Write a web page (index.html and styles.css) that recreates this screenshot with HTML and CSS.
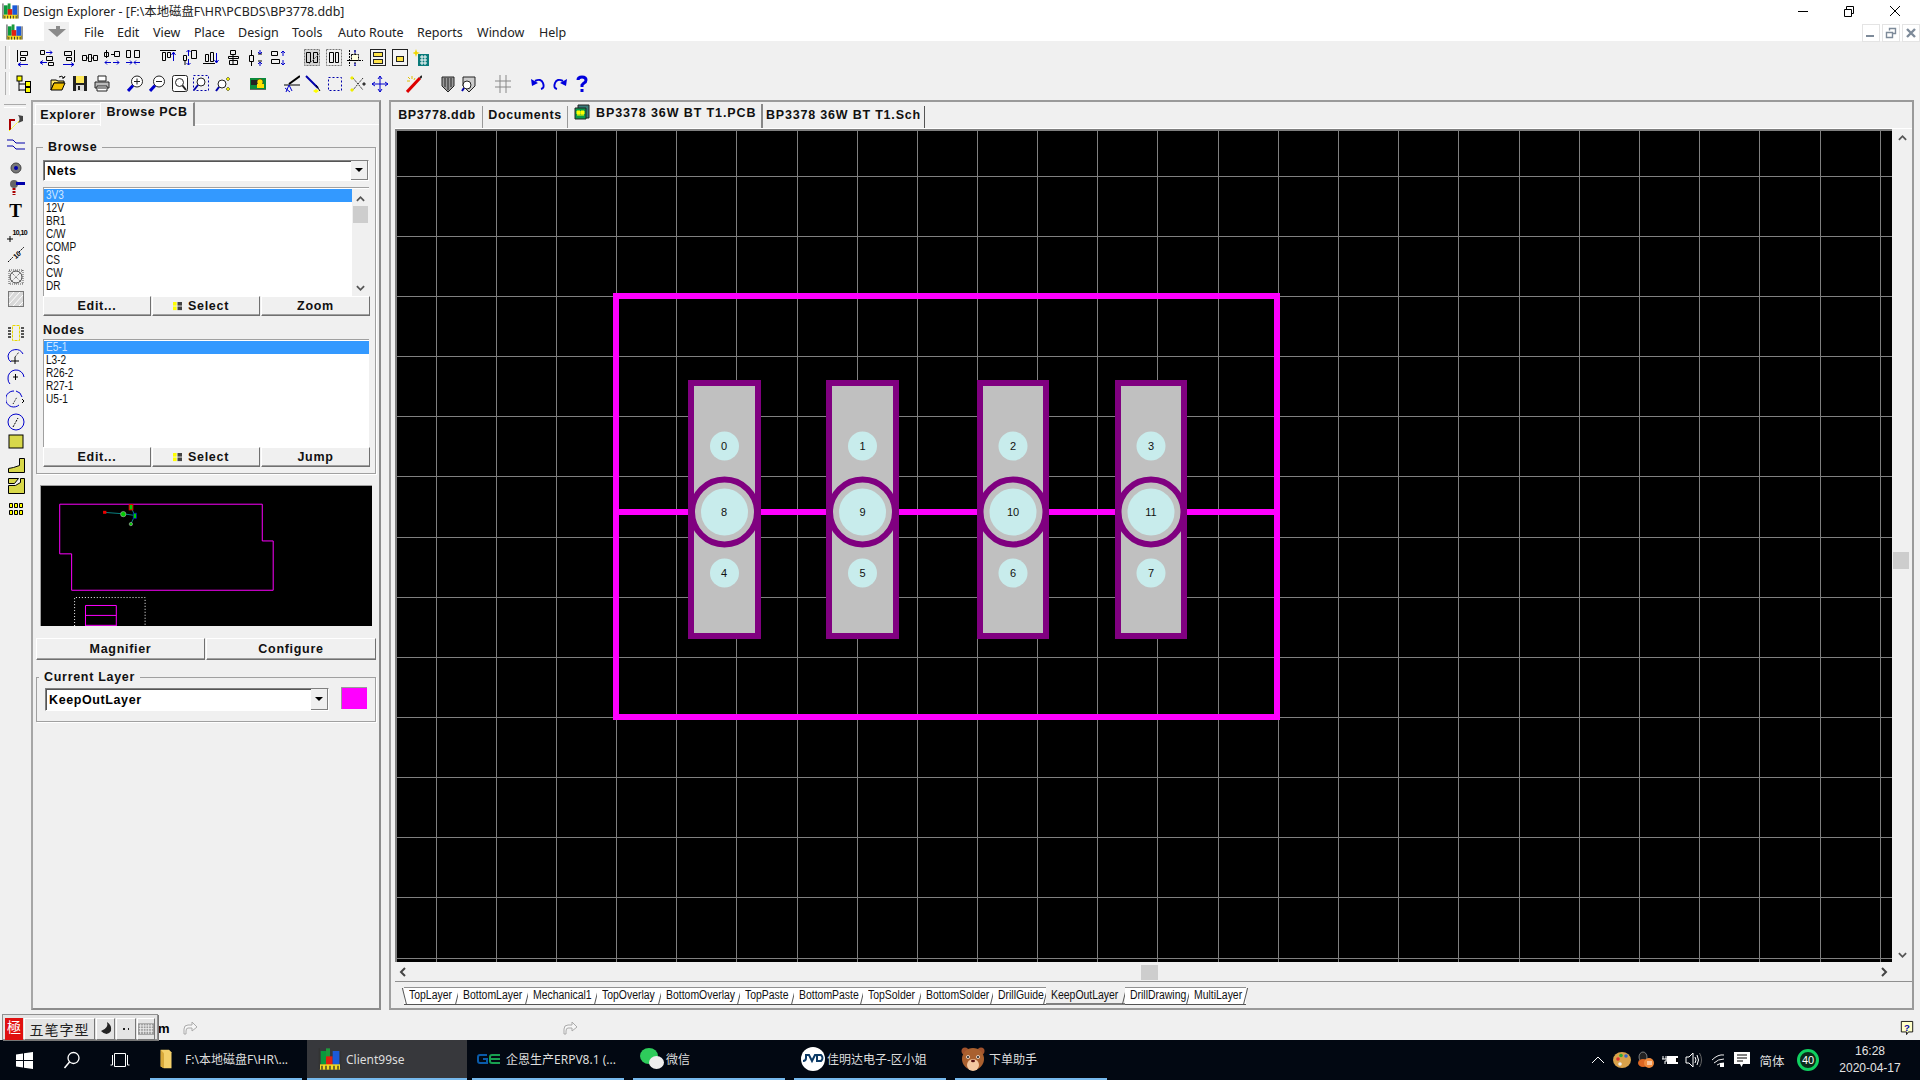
FILE: index.html
```html
<!DOCTYPE html>
<html lang="zh">
<head>
<meta charset="utf-8">
<title>Design Explorer</title>
<link rel="stylesheet" href="styles.css">
</head>
<body>
<svg class="defs" width="0" height="0">
  <symbol id="protel" viewBox="0 0 18 18">
    <rect x="2" y="3" width="4" height="10" fill="#0a9a3c"/><rect x="6" y="1" width="3" height="7" fill="#1e9a3c"/>
    <rect x="6" y="7" width="5" height="7" fill="#e02010"/><rect x="11" y="3" width="5" height="11" fill="#1a5ad8"/>
    <rect x="1" y="13" width="16" height="4" fill="#f4dc20"/><path d="M1 1v16M17 3v14" stroke="#333"/>
    <path d="M3 14v3M6 14v3M9 14v3M12 14v3M15 14v3" stroke="#333"/>
  </symbol>
  <symbol id="check" viewBox="0 0 10 10">
    <rect width="4" height="4" fill="#ff0"/><rect y="5" width="4" height="4" fill="#ff0"/><rect x="5" width="5" height="4" fill="#444"/><rect x="5" y="5" width="5" height="4" fill="#444"/>
  </symbol>
  <symbol id="chev-up" viewBox="0 0 10 8"><path d="M1 6l4-4 4 4" fill="none" stroke="#555" stroke-width="2"/></symbol>
  <symbol id="chev-down" viewBox="0 0 10 8"><path d="M1 2l4 4 4-4" fill="none" stroke="#555" stroke-width="2"/></symbol>
  <symbol id="chev-left" viewBox="0 0 8 10"><path d="M6 1L2 5l4 4" fill="none" stroke="#444" stroke-width="2"/></symbol>
  <symbol id="chev-right" viewBox="0 0 8 10"><path d="M2 1l4 4-4 4" fill="none" stroke="#444" stroke-width="2"/></symbol>
  <symbol id="ghost-arrow" viewBox="0 0 16 16"><path d="M2 15V10q0-4 4-4h4V3l5 5-5 4V9H6q-2 0-2 3v3z" fill="#f6f6f6" stroke="#aaa"/></symbol>
</svg>

<header class="titlebar">
  <svg class="app-ico"><use href="#protel"/></svg>
  <span class="title-text">Design Explorer - [F:\本地磁盘F\HR\PCBDS\BP3778.ddb]</span>
  <div class="winbtns">
    <svg class="winbtn" viewBox="0 0 46 20"><path d="M18 10.5h10" stroke="#000" fill="none"/></svg>
    <svg class="winbtn" viewBox="0 0 46 20"><path d="M18.5 8.5h7v7h-7zM20.5 8V5.5h7v7H26" stroke="#000" fill="none"/></svg>
    <svg class="winbtn" viewBox="0 0 46 20"><path d="M18 5l10 10M28 5L18 15" stroke="#000" fill="none"/></svg>
  </div>
</header>

<nav class="menubar">
  <svg class="menu-ico"><use href="#protel"/></svg>
  <span class="doc-chip"><svg width="22" height="16" viewBox="0 0 22 16"><path d="M2 5h8V2h4v3h6l-9 8z" fill="#8a8a8a"/></svg></span>
  <div class="menus">
    <span>File</span><span>Edit</span><span>View</span><span>Place</span><span>Design</span><span>Tools</span><span>Auto Route</span><span>Reports</span><span>Window</span><span>Help</span>
  </div>
  <div class="mdibtns">
    <span class="mdi"><svg width="12" height="12" viewBox="0 0 12 12"><rect x="1" y="8" width="8" height="2" fill="#7d8a99"/></svg></span>
    <span class="mdi"><svg width="12" height="12" viewBox="0 0 12 12"><path d="M1.5 5.5h6v5h-6zM4.5 3.5v-2h6v5h-3" fill="none" stroke="#7d8a99" stroke-width="1.4"/></svg></span>
    <span class="mdi"><svg width="12" height="12" viewBox="0 0 12 12"><path d="M2 2l8 8M10 2l-8 8" stroke="#7d8a99" stroke-width="2.4"/></svg></span>
  </div>
</nav>

<section class="toolbars">
  <div class="tbrow tbrow-a">
    <svg class="ic" viewBox="0 0 16 18"><path class="k" d="M1.500 1v12M4.500 2.500h7v4h-7zM4.500 8.500h5v3h-5z"/><path class="u" d="M2 15.500h10M2 15.500l3-2M2 15.500l3 2"/></svg>
    <svg class="ic" viewBox="0 0 16 18"><path class="k" d="M1.500 1.500h4v4h-4zM7.500 7.500h6v4h-6zM9.500 13.500h5v3h-5z"/><path class="u" d="M7 3.500h6M13 3.500l-2-2M13 3.500l-2 2M1 13.500h7M1 13.500l3-2M1 13.500l3 2"/></svg>
    <svg class="ic" viewBox="0 0 16 18"><path class="k" d="M14.500 1v12M4.500 2.500h7v4h-7zM6.500 8.500h5v3h-5z"/><path class="u" d="M3 15.500h11M14 15.500l-3-2M14 15.500l-3 2"/></svg>
    <svg class="ic" viewBox="0 0 16 18"><path class="k" d="M.5 6.500h4v5h-4zM6.500 5.500h3v7h-3zM11.500 6.500h4v5h-4zM4 9h3M9 9h3"/></svg>
    <svg class="ic" viewBox="0 0 16 18"><path class="k" d="M2.500 1v8M.5 3.500h4v4h-4zM10.500 2.500h5v5h-5zM7 5.500h3"/><path class="u" d="M1 13.500h6M1 13.500l2-2M1 13.500l2 2M9 13.500h6M15 13.500l-2-2M15 13.500l-2 2"/></svg>
    <svg class="ic" viewBox="0 0 16 18"><path class="k" d="M1.500 1.500h4v7h-4zM9.500 1.500h5v7h-5z"/><path class="u" d="M1 13.500h6M7 13.500l-2-2M7 13.500l-2 2M9 13.500h6M9 13.500l2-2M9 13.500l2 2"/></svg>
    <svg class="ic" viewBox="0 0 16 18"><path class="k" d="M0 1.500h16M2.500 3.500h3v8h-3zM7.500 3.500h3v5h-3z"/><path class="u" d="M13.500 3v9M13.500 3l-2 3M13.500 3l2 3"/></svg>
    <svg class="ic" viewBox="0 0 16 18"><path class="k" d="M1.500 6.500h3v5h-3zM9.500 1.500h5v8h-5zM3 11v5"/><path class="u" d="M6.500 1v6M6.500 1l-2 2M6.500 1l2 2M6.500 10v6M6.500 16l-2-2M6.500 16l2-2"/></svg>
    <svg class="ic" viewBox="0 0 16 18"><path class="k" d="M0 14.500h12M2.500 5.500h3v7h-3zM7.500 3.500h3v9h-3z"/><path class="u" d="M13.500 4v10M13.500 14l-2-3M13.500 14l2-3"/></svg>
    <svg class="ic" viewBox="0 0 16 18"><path class="k" d="M4.500 1.500h5v4h-5zM2.500 7.500h10v2h-10zM3.500 11.500h8v4h-8zM7 5v11"/></svg>
    <svg class="ic" viewBox="0 0 16 18"><path class="k" d="M3.500 1v5M1.500 6.500h4v6h-4zM3.500 13v4M10 5h4M10 12h4"/><path class="u" d="M12 1v4M12 5l-2-2M12 5l2-2M12 13v4M12 13l-2 2M12 13l2 2"/></svg>
    <svg class="ic" viewBox="0 0 16 18"><path class="k" d="M1.500 2.500h6v4h-6zM1.500 10.500h8v4h-8z"/><path class="u" d="M13 2v5M13 2l-2 2M13 2l2 2M13 16v-5M13 16l-2-2M13 16l2-2"/></svg>
    <svg class="ic" viewBox="0 0 16 18"><rect x=".5" y=".5" width="15" height="16" fill="#d4d4d4" stroke="#777" stroke-dasharray="2 1"/><path class="k" d="M2.500 3.500h4v10h-4zM9.500 3.500h4v10h-4z"/><path d="M5 15L15 5" stroke="#777"/></svg>
    <svg class="ic" viewBox="0 0 16 18"><rect x=".5" y=".5" width="15" height="16" fill="#f0f0f0" stroke="#777" stroke-dasharray="2 1"/><path class="k" d="M3.500 3.500h4v10h-4zM9.500 3.500h3v10h-3z"/></svg>
    <svg class="ic" viewBox="0 0 16 18"><path class="k" d="M4.500 5.500h7v6h-7zM0 11.500h16M8 1v16M2.500 1v16" stroke-dasharray="2 1"/><rect x="5" y="6" width="6" height="5" fill="#ffd"/><path class="u" d="M8 1v3M8 17v-3"/></svg>
    <svg class="ic" viewBox="0 0 16 18"><rect x=".5" y=".5" width="15" height="16" fill="#f4f4f4" stroke="#222"/><rect x="3.500" y="3.500" width="9" height="4" fill="#ffe44a" stroke="#222"/><rect x="3.500" y="10.500" width="9" height="4" fill="#ffe44a" stroke="#222"/></svg>
    <svg class="ic" viewBox="0 0 16 18"><rect x=".5" y=".5" width="15" height="16" fill="#f4f4f4" stroke="#222"/><rect x="4.500" y="7.500" width="7" height="5" fill="#ffe44a" stroke="#222"/></svg>
    <svg class="ic" viewBox="0 0 16 18"><path d="M3 0l1 3 3 1-3 1-1 3-1-3-3-1 3-1z" fill="#f0d800"/><rect x="5" y="5" width="11" height="12" fill="#0a7a7a"/><path d="M7 8h7M7 11h7M7 14h7M9 6v10M12 6v10" stroke="#fff"/></svg>
  </div>
  <div class="tbrow tbrow-b">
    <svg class="ic" viewBox="0 0 16 18"><path d="M3 4v12M3 9h7M3 15h7" stroke="#000" fill="none"/><rect x="1" y="1" width="5" height="5" fill="#ff0" stroke="#000"/><rect x="9.500" y="6.500" width="5" height="5" fill="#ff0" stroke="#000"/><rect x="9.500" y="12.500" width="5" height="5" fill="#ff0" stroke="#000"/></svg>
    <svg class="ic" viewBox="0 0 16 18"><path d="M1 5h5l2 1h6v2H4L1 15z" fill="#ffe86a" stroke="#000"/><path d="M1 15l3-7h11l-3 7z" fill="#f0c000" stroke="#000"/><path d="M9 2q3-2 5 1M14 3l1-2M14 3l-2 0" fill="none" stroke="#000"/></svg>
    <svg class="ic" viewBox="0 0 16 18"><rect x="1" y="1" width="14" height="15" fill="#222"/><rect x="4" y="1" width="8" height="7" fill="#ffe95a"/><rect x="4" y="10" width="8" height="6" fill="#ddd"/><rect x="6" y="11" width="2" height="4" fill="#222"/></svg>
    <svg class="ic" viewBox="0 0 16 18"><path d="M4 1h8v5H4z" fill="#fff" stroke="#222"/><path d="M1 7h14v6H1z" fill="#bbb" stroke="#222"/><path d="M3 11h10v5H3z" fill="#fff" stroke="#222"/><path d="M4 13h8" stroke="#222"/></svg>
    <svg class="ic" viewBox="0 0 16 18"><circle cx="10" cy="6.500" r="5.500" fill="#fff" stroke="#222"/><path d="M7 6.500h6M10 3.500v6" stroke="#222"/><path d="M6 10.500L1 16" stroke="#00c" stroke-width="3"/></svg>
    <svg class="ic" viewBox="0 0 16 18"><circle cx="10" cy="6.500" r="5.500" fill="#fff" stroke="#222"/><path d="M7 6.500h6" stroke="#222"/><path d="M6 10.500L1 16" stroke="#00c" stroke-width="3"/></svg>
    <svg class="ic" viewBox="0 0 16 18"><rect x=".5" y=".5" width="15" height="16" rx="2" fill="#fff" stroke="#222"/><circle cx="7.500" cy="7.500" r="4" fill="none" stroke="#222"/><path d="M10.500 10.500L14 15" stroke="#222" stroke-width="2"/></svg>
    <svg class="ic" viewBox="0 0 16 18"><rect x=".5" y=".5" width="15" height="15" fill="none" stroke="#00a" stroke-dasharray="2 2"/><circle cx="8" cy="7" r="4" fill="#fff" stroke="#222"/><path d="M5 10l-4 5" stroke="#00a" stroke-width="2"/></svg>
    <svg class="ic" viewBox="0 0 16 18"><circle cx="7" cy="9" r="4" fill="#fff" stroke="#222"/><path d="M4 12l-3 4" stroke="#00a" stroke-width="2"/><path d="M13 2l2 2-2 2-2-2zM13 12l2 2-2 2-2-2z" fill="#ee0" stroke="#222" stroke-width=".5"/></svg>
    <svg class="ic" viewBox="0 0 16 18"><rect y="3" width="16" height="11" fill="#0a8a3a"/><rect x="1" y="5" width="7" height="5" fill="#222"/><circle cx="10" cy="7" r="3" fill="#ffe000" stroke="#222" stroke-width=".5"/><rect x="7" y="9" width="7" height="4" fill="#ffe000"/><rect x="0" y="14" width="16" height="1" fill="#666"/></svg>
    <svg class="ic" viewBox="0 0 16 18"><path d="M5 9L16 1" stroke="#000" stroke-width="2"/><path d="M0 10h16" stroke="#000"/><path d="M5 10L2 17M5 10l3 6M1 13l5 4" stroke="#00c" fill="none"/></svg>
    <svg class="ic" viewBox="0 0 16 18"><path d="M1 1l12 12" stroke="#00a" stroke-width="2"/><path d="M11 10l4 6" stroke="#000"/><path d="M8 16l3-2 3 2-3 2z" fill="#ff0"/></svg>
    <svg class="ic" viewBox="0 0 16 18"><rect x="1.500" y="2.500" width="13" height="13" fill="none" stroke="#00a" stroke-dasharray="2 2"/></svg>
    <svg class="ic" viewBox="0 0 16 18"><path d="M3 3l10 12M13 3L3 15" stroke="#333" stroke-dasharray="2 1"/><path d="M2 1l2 2-2 2-2-2zM2 13l2 2-2 2-2-2z" fill="#ee0"/><path d="M14 7l2 2-2 2-2-2z" fill="#333"/></svg>
    <svg class="ic" viewBox="0 0 16 18"><path d="M8 1v16M0 9h16M8 1L6 4M8 1l2 3M8 17l-2-3M8 17l2-3M0 9l3-2M0 9l3 2M16 9l-3-2M16 9l-3 2" stroke="#00c" fill="none"/></svg>
    <svg class="ic" viewBox="0 0 16 18"><path d="M1 17L14 3" stroke="#d00" stroke-width="3"/><path d="M14 3l2-2" stroke="#222" stroke-width="2"/><path d="M2 2l2 2M6 1v3M1 6h3M9 3L8 5" stroke="#e0c000"/></svg>
    <svg class="ic" viewBox="0 0 16 18"><path d="M2 2h12v9l-6 6-6-6z" fill="#999" stroke="#222"/><path d="M5 3v9M8 3v12M11 3v9" stroke="#222"/></svg>
    <svg class="ic" viewBox="0 0 16 18"><path d="M2 2h12v9l-6 6-6-6z" fill="#ccc" stroke="#222"/><circle cx="6" cy="10" r="4" fill="#fff" stroke="#222"/><path d="M3 13l-2 3" stroke="#00a" stroke-width="2"/></svg>
    <svg class="ic" viewBox="0 0 16 18"><path d="M0 6h16M0 12h16M5 0v18M11 0v18" stroke="#888" fill="none"/></svg>
    <svg class="ic" viewBox="0 0 16 18"><path d="M5 6q6-3 8 2t-2 6" fill="none" stroke="#00d" stroke-width="2"/><path d="M1 4l1 7 6-3z" fill="#00d"/></svg>
    <svg class="ic" viewBox="0 0 16 18"><path d="M11 6Q5 3 3 8t2 6" fill="none" stroke="#00d" stroke-width="2"/><path d="M15 4l-1 7-6-3z" fill="#00d"/></svg>
    <svg class="ic" viewBox="0 0 16 18"><path d="M4 5q0-3 4-3t4 3q0 2-2 3l-2 2v2" fill="none" stroke="#00d" stroke-width="3"/><rect x="6.500" y="14" width="3" height="3" fill="#00d"/></svg>
  </div>
</section>

<main class="workspace">
  <aside class="toolstrip">
    <svg class="ic-l" viewBox="0 0 20 18"><path d="M4 16V6h5" fill="none" stroke="#a00" stroke-width="2"/><path d="M3 17l12-12" stroke="#ff0" stroke-dasharray="2 1"/><path d="M12 1q3 4 0 8l5-2V2z" fill="#444"/></svg>
    <svg class="ic-l" viewBox="0 0 20 18"><path d="M1 5h6l3 3h9M1 11h6l3 3h9" fill="none" stroke="#00a"/></svg>
    <svg class="ic-l" viewBox="0 0 20 18"><circle cx="10" cy="9" r="5" fill="#777" stroke="#444"/><circle cx="10" cy="9" r="2" fill="#00a"/></svg>
    <svg class="ic-l" viewBox="0 0 20 18"><path d="M8 7v10" stroke="#a00" stroke-width="3" stroke-dasharray="2 1"/><circle cx="8" cy="6" r="4" fill="#666"/><rect x="10" y="4" width="9" height="3" fill="#00a"/></svg>
    <span class="t-tool">T</span>
    <svg class="ic-l ic-coord" viewBox="0 0 28 18"><path d="M5 13h6M8 10v6" stroke="#000"/><text x="10.500" y="9" class="mini mini-coord">10,10</text></svg>
    <svg class="ic-l" viewBox="0 0 20 18"><path d="M2 16l5-5M13 6l5-5" stroke="#000" stroke-dasharray="2 1"/><text x="7" y="12" class="mini" transform="rotate(-40 10 9)">10</text></svg>
    <svg class="ic-l" viewBox="0 0 20 18"><circle cx="10" cy="9" r="6" fill="none" stroke="#444"/><path d="M3 2h14v14H3zM3 2l14 14M17 2L3 16" fill="none" stroke="#555" stroke-dasharray="1 1"/></svg>
    <svg class="ic-l" viewBox="0 0 20 18"><rect x="2.500" y="1.500" width="15" height="15" fill="#d8d8d8" stroke="#777"/><path d="M3 8l5-6M3 14L14 2M7 16L17 5M13 16l4-4" stroke="#fff"/></svg>
    <svg class="ic-l" viewBox="0 0 20 18"><path d="M6.500 1.500h7v15h-7z" fill="none" stroke="#e8d800" stroke-dasharray="3 1"/><path d="M2 4h3M2 7h3M2 10h3M2 13h3M15 4h3M15 7h3M15 10h3M15 13h3" stroke="#222" stroke-width="1.500"/></svg>
    <svg class="ic-l" viewBox="0 0 20 18"><path d="M2 9a8 8 0 0 1 15-2" fill="none" stroke="#00c"/><path d="M2 9q0 4 3 6" fill="none" stroke="#00c"/><path d="M5 14h8M9 10v7" stroke="#000"/><path d="M9 10l4-5" stroke="#000" stroke-dasharray="1 1"/></svg>
    <svg class="ic-l" viewBox="0 0 20 18"><path d="M2 11a8 8 0 0 1 16-2" fill="none" stroke="#00c"/><path d="M2 11q0 3 2 5" fill="none" stroke="#00c"/><path d="M7 9h5M9.500 6v6" stroke="#000"/></svg>
    <svg class="ic-l" viewBox="0 0 20 18"><path d="M8 1a8 8 0 1 0 5 14M10 1a8 8 0 0 1 6 6" fill="none" stroke="#00c"/><path d="M7 14l4-7" stroke="#000" stroke-dasharray="1 1"/><path d="M16 9l2 2-2 2" stroke="#000" fill="none"/></svg>
    <svg class="ic-l" viewBox="0 0 20 18"><circle cx="10" cy="9" r="8" fill="none" stroke="#00c"/><path d="M7 14l5-9" stroke="#000" stroke-dasharray="2 1"/></svg>
    <svg class="ic-l" viewBox="0 0 20 18"><rect x="3" y="2" width="14" height="13" fill="#d8d84a" stroke="#000" stroke-width="1"/></svg>
    <svg class="ic-l" viewBox="0 0 20 18"><path d="M2.500 16.500v-4l5-1 6-2v-7h5v14z" fill="#d8d84a" stroke="#000"/></svg>
    <svg class="ic-l" viewBox="0 0 20 18"><path d="M2.500 1.500h10l-4 5h-6zM2.500 8.500h7l5-3v-4h4v15h-16z" fill="#d8d84a" stroke="#000"/></svg>
    <svg class="ic-l" viewBox="0 0 20 18"><path d="M3.500 3.500h3v4h-3zM8.500 3.500h3v4h-3zM13.500 3.500h3v4h-3zM3.500 10.500h3v4h-3zM8.500 10.500h3v4h-3zM13.500 10.500h3v4h-3z" fill="#ff0" stroke="#000"/></svg>
  </aside>

  <aside class="sidepanel">
    <div class="ptabs">
      <span class="ptab">Explorer</span>
      <span class="ptab ptab-on">Browse PCB</span>
    </div>
    <div class="ppage">
      <fieldset class="group group-browse">
        <legend>Browse</legend>
        <div class="combo"><span class="combo-val">Nets</span><span class="combo-btn"><i class="tri"></i></span></div>
        <div class="listbox listbox-nets">
          <ul class="items">
            <li class="sel"><span>3V3</span></li><li><span>12V</span></li><li><span>BR1</span></li><li><span>C/W</span></li><li><span>COMP</span></li><li><span>CS</span></li><li><span>CW</span></li><li><span>DR</span></li>
          </ul>
          <div class="vscroll-mini">
            <svg class="chev"><use href="#chev-up"/></svg>
            <span class="thumb"></span>
            <svg class="chev chev-b"><use href="#chev-down"/></svg>
          </div>
        </div>
        <div class="btnrow">
          <button class="btn">Edit...</button>
          <button class="btn btn-sel"><svg class="chk"><use href="#check"/></svg>Select</button>
          <button class="btn">Zoom</button>
        </div>
        <div class="nodes-label">Nodes</div>
        <div class="listbox listbox-nodes">
          <ul class="items items-full">
            <li class="sel"><span>E5-1</span></li><li><span>L3-2</span></li><li><span>R26-2</span></li><li><span>R27-1</span></li><li><span>U5-1</span></li>
          </ul>
        </div>
        <div class="btnrow">
          <button class="btn">Edit...</button>
          <button class="btn btn-sel"><svg class="chk"><use href="#check"/></svg>Select</button>
          <button class="btn">Jump</button>
        </div>
      </fieldset>

      <svg class="preview" viewBox="121 45 995 423">
        <path d="M175 100H787V211H820V360H211V250H175Z" fill="none" stroke="#f0f" stroke-width="3"/>
        <path d="M220 468V382H433V468" fill="none" stroke="#fff" stroke-width="3" stroke-dasharray="3 6"/>
        <path d="M253 468V406H346V468M253 436H346M253 466H346" fill="none" stroke="#f0f" stroke-width="3"/>
        <path d="M315 125L367 129 402 134M390 108L402 134 390 160" fill="none" stroke="#0a8080" stroke-width="3"/>
        <rect x="306" y="120" width="10" height="9" fill="#e00"/>
        <circle cx="367" cy="130" r="8" fill="#0c0" stroke="#aaa" stroke-width="2"/>
        <rect x="385" y="101" width="11" height="16" fill="#0c0" stroke="#e00" stroke-width="3"/>
        <rect x="397" y="127" width="10" height="16" fill="#0c0" stroke="#00c" stroke-width="2"/>
        <circle cx="390" cy="160" r="5" fill="#0c0" stroke="#aaa" stroke-width="2"/>
      </svg>

      <div class="btnrow btnrow-wide">
        <button class="btn">Magnifier</button>
        <button class="btn">Configure</button>
      </div>

      <fieldset class="group group-layer">
        <legend>Current Layer</legend>
        <div class="layer-row">
          <div class="combo combo-layer"><span class="combo-val">KeepOutLayer</span><span class="combo-btn"><i class="tri"></i></span></div>
          <span class="swatch"></span>
        </div>
      </fieldset>
    </div>
  </aside>

  <section class="docpanel">
    <div class="doctabs">
      <span class="dtab dtab-1">BP3778.ddb</span>
      <span class="dtab dtab-2">Documents</span>
      <span class="dtab dtab-3 dtab-on"><svg class="pcb-ico" viewBox="0 0 16 16"><path d="M4 1h11v13H4z" fill="#3a7a7a" stroke="#222"/><path d="M1 4h11v11H1z" fill="#0a9a4a" stroke="#222"/><path d="M3 7h3v3H3zM7 7h3v3H7zM3 11h7" fill="#ff0" stroke="#ff0"/></svg>BP3378 36W BT T1.PCB</span>
      <span class="dtab dtab-4">BP3378 36W BT T1.Sch</span>
    </div>
    <div class="docgrid">
      <svg class="canvas" viewBox="395 129 1497 833">
        <rect x="395" y="129" width="1497" height="833" fill="#000"/>
        <path class="gridlines" d="M436.500 129V962M496.500 129V962M556.500 129V962M616.500 129V962M676.500 129V962M736.500 129V962M797.500 129V962M857.500 129V962M917.500 129V962M977.500 129V962M1037.500 129V962M1097.500 129V962M1157.500 129V962M1218.500 129V962M1278.500 129V962M1338.500 129V962M1398.500 129V962M1458.500 129V962M1519.500 129V962M1579.500 129V962M1639.500 129V962M1699.500 129V962M1759.500 129V962M1820.500 129V962M1880.500 129V962M395 176.500H1892M395 236.500H1892M395 296.500H1892M395 356.500H1892M395 416.500H1892M395 476.500H1892M395 537.500H1892M395 597.500H1892M395 657.500H1892M395 717.500H1892M395 777.500H1892M395 837.500H1892M395 897.500H1892M395 958.500H1892"/>
        <path class="frame" d="M395 130H1892M396 129V962"/>
        <rect class="outline" x="616" y="296" width="661" height="421"/>
        <path class="outline" d="M616 512H1277"/>
        <g class="pad"><rect x="691" y="383" width="67" height="253"/><circle class="ring" cx="724.500" cy="512" r="32.500"/><circle class="hole" cx="724.500" cy="512" r="23.500"/><circle class="hole" cx="724.500" cy="446" r="14.500"/><circle class="hole" cx="724.500" cy="573" r="14.500"/></g>
        <g class="pad"><rect x="829" y="383" width="67" height="253"/><circle class="ring" cx="862.500" cy="512" r="32.500"/><circle class="hole" cx="862.500" cy="512" r="23.500"/><circle class="hole" cx="862.500" cy="446" r="14.500"/><circle class="hole" cx="862.500" cy="573" r="14.500"/></g>
        <g class="pad"><rect x="980" y="383" width="66" height="253"/><circle class="ring" cx="1013" cy="512" r="32.500"/><circle class="hole" cx="1013" cy="512" r="23.500"/><circle class="hole" cx="1013" cy="446" r="14.500"/><circle class="hole" cx="1013" cy="573" r="14.500"/></g>
        <g class="pad"><rect x="1118" y="383" width="66" height="253"/><circle class="ring" cx="1151" cy="512" r="32.500"/><circle class="hole" cx="1151" cy="512" r="23.500"/><circle class="hole" cx="1151" cy="446" r="14.500"/><circle class="hole" cx="1151" cy="573" r="14.500"/></g>
        <g class="padnum">
          <text x="724" y="450">0</text><text x="862.500" y="450">1</text><text x="1013" y="450">2</text><text x="1151" y="450">3</text>
          <text x="724" y="516">8</text><text x="862.500" y="516">9</text><text x="1013" y="516">10</text><text x="1151" y="516">11</text>
          <text x="724" y="577">4</text><text x="862.500" y="577">5</text><text x="1013" y="577">6</text><text x="1151" y="577">7</text>
        </g>
      </svg>
      <div class="vscroll">
        <svg class="chev"><use href="#chev-up"/></svg>
        <span class="thumb-v"></span>
        <svg class="chev"><use href="#chev-down"/></svg>
      </div>
      <div class="hscroll">
        <svg class="chev-h"><use href="#chev-left"/></svg>
        <span class="thumb-h"></span>
        <svg class="chev-h"><use href="#chev-right"/></svg>
      </div>
    </div>
    <div class="layertabs">
      <span class="ltab"><span>TopLayer</span></span><span class="ltab"><span>BottomLayer</span></span><span class="ltab"><span>Mechanical1</span></span><span class="ltab"><span>TopOverlay</span></span><span class="ltab"><span>BottomOverlay</span></span><span class="ltab"><span>TopPaste</span></span><span class="ltab"><span>BottomPaste</span></span><span class="ltab"><span>TopSolder</span></span><span class="ltab"><span>BottomSolder</span></span><span class="ltab"><span>DrillGuide</span></span><span class="ltab ltab-on"><span>KeepOutLayer</span></span><span class="ltab"><span>DrillDrawing</span></span><span class="ltab"><span>MultiLayer</span></span>
    </div>
  </section>
</main>

<footer class="statusbar">
  <span class="status-m">m</span>
  <svg class="ghost ghost-1"><use href="#ghost-arrow"/></svg>
  <svg class="ghost ghost-2"><use href="#ghost-arrow"/></svg>
  <svg class="help-ico" viewBox="0 0 16 18"><path d="M1.500 1.500h13v12h-5l-2 3v-3h-6z" fill="#ffffc8" stroke="#000"/><text x="8" y="12" class="help-q">?</text></svg>
  <div class="ime">
    <span class="ime-seal">極</span>
    <span class="ime-name">五笔字型</span>
    <span class="ime-cell"><svg width="14" height="16" viewBox="0 0 14 16"><path d="M8 1q2 6-6 9q6 6 10 0q1-6-4-9z" fill="#222"/></svg></span>
    <span class="ime-cell"><svg width="14" height="16" viewBox="0 0 14 16"><path d="M4 7h2v2H4zM9 7h1v2H9z" fill="#222"/></svg></span>
    <span class="ime-cell"><svg width="16" height="13" viewBox="0 0 18 14"><rect width="18" height="13" fill="#999"/><path d="M1 3h16M1 6h16M1 9h16M3 1v11M6 1v11M9 1v11M12 1v11M15 1v11" stroke="#eee"/></svg></span>
  </div>
</footer>

<footer class="taskbar">
  <span class="tb-sys"><svg width="17" height="17" viewBox="0 0 17 17"><path d="M0 2.500l7-1v6.500H0zM8 1.300L17 0v8H8zM0 9h7v6.500l-7-1zM8 9h9v8l-9-1.300z" fill="#fff"/></svg></span>
  <span class="tb-sys"><svg width="18" height="18" viewBox="0 0 18 18"><circle cx="10.500" cy="7" r="5.500" fill="none" stroke="#fff" stroke-width="1.300"/><path d="M6.500 11L1.500 17" stroke="#fff" stroke-width="1.500"/></svg></span>
  <span class="tb-sys"><svg width="20" height="16" viewBox="0 0 20 16"><path d="M4.500 1.500h11v13h-11zM2.500 3v10H.5M17.500 3v10h2" fill="none" stroke="#fff"/></svg></span>
  <span class="tb-item tb-first"><svg class="tb-ico" viewBox="0 0 18 24"><path d="M2 1h10l3 3v19H6l-4-2z" fill="#f4d06a"/><path d="M2 1l4 4v18l-4-2z" fill="#d8a93a"/></svg>F:\本地磁盘F\HR\...</span>
  <span class="tb-item tb-active"><svg class="tb-ico tb-ico-client"><use href="#protel"/></svg>Client99se</span>
  <span class="tb-item"><svg class="tb-ico tb-ico-wide" viewBox="0 0 24 12"><path d="M10 2H3q-2 0-2 2v4q0 2 2 2h7V6H6" fill="none" stroke="#0a5aa8" stroke-width="2"/><path d="M23 2h-8q-2 0-2 2v4q0 2 2 2h8M13 6h10" fill="none" stroke="#18a050" stroke-width="2"/></svg>企恩生产ERPV8.1 (...</span>
  <span class="tb-item tb-wx"><svg class="tb-ico tb-ico-wx" viewBox="0 0 24 24"><ellipse cx="9" cy="9" rx="9" ry="8" fill="#2ecc5b"/><ellipse cx="16.500" cy="15.500" rx="7.500" ry="6.500" fill="#eee"/></svg>微信</span>
  <span class="tb-item tb-jmd"><svg class="tb-ico tb-ico-jmd" viewBox="0 0 24 24"><circle cx="12" cy="12" r="12" fill="#fff"/><path d="M2 14q3 0 3-3V8h3l3 6 3-6h2v6h4q3-3 0-6h-4" fill="none" stroke="#0c3a66" stroke-width="2"/></svg>佳明达电子-区小姐</span>
  <span class="tb-item tb-bear"><svg class="tb-ico tb-ico-bear" viewBox="0 0 24 24"><circle cx="4" cy="4" r="3.500" fill="#a0522d"/><circle cx="20" cy="4" r="3.500" fill="#a0522d"/><ellipse cx="12" cy="12" rx="11" ry="11" fill="#a9602f"/><ellipse cx="12" cy="18" rx="6" ry="6" fill="#f4c8a0"/><circle cx="7" cy="10" r="1.800" fill="#fff"/><circle cx="17" cy="10" r="1.800" fill="#fff"/><circle cx="7" cy="10" r="1" fill="#111"/><circle cx="17" cy="10" r="1" fill="#111"/><ellipse cx="12" cy="14" rx="2" ry="1.300" fill="#511"/></svg>下单助手</span>
  <div class="tray">
    <span class="tray-i"><svg width="14" height="10" viewBox="0 0 14 10"><path d="M1 8l6-6 6 6" fill="none" stroke="#fff"/></svg></span>
    <span class="tray-i"><svg width="18" height="18" viewBox="0 0 18 18"><ellipse cx="9" cy="9" rx="9" ry="8" fill="#d9a24a"/><circle cx="5" cy="8" r="1.800" fill="#d33"/><circle cx="8" cy="4.500" r="1.800" fill="#3a3"/><circle cx="13" cy="5" r="1.800" fill="#36c"/><circle cx="7" cy="13" r="1.800" fill="#eee"/></svg></span>
    <span class="tray-i"><svg width="18" height="18" viewBox="0 0 18 18"><ellipse cx="6" cy="6" rx="4" ry="5" fill="#222" stroke="#ddd" stroke-width=".5"/><ellipse cx="6" cy="12" rx="5" ry="4" fill="#d62" /><circle cx="12" cy="12" r="5" fill="#f08a3c"/><path d="M10 11h5M10 13h5" stroke="#fff"/></svg></span>
    <span class="tray-i"><svg width="16" height="14" viewBox="0 0 16 14"><path d="M1 3v3M4 3v3M0 6h5v2H3v3" stroke="#fff" fill="none"/><rect x="5.500" y="3.500" width="10" height="7" fill="#fff" stroke="#fff"/><rect x="14" y="5" width="2" height="4" fill="#000"/></svg></span>
    <span class="tray-i"><svg width="18" height="16" viewBox="0 0 18 16"><path d="M1 5h3l4-4v14l-4-4H1z" fill="none" stroke="#fff"/><path d="M10 5q2 3 0 6M12 3q3 5 0 10" fill="none" stroke="#fff"/><path d="M14.500 1q4 7 0 14" fill="none" stroke="#666"/></svg></span>
    <span class="tray-i"><svg width="14" height="14" viewBox="0 0 14 14"><path d="M1 7q6-6 12-5M3 10q4-4 10-4M6 12q3-2 7-2" fill="none" stroke="#eee"/><rect x="9" y="10" width="4" height="4" fill="#fff"/></svg></span>
    <span class="tray-i"><svg width="16" height="17" viewBox="0 0 16 17"><path d="M0 0h16v12H9l-1.500 3L6 12H0z" fill="#fff"/><path d="M3 3h10M3 6h10M3 9h6" stroke="#000"/></svg></span>
    <span class="tray-lang">简体</span>
    <span class="tray-badge"><b>40</b></span>
    <span class="clock"><span>16:28</span><span>2020-04-17</span></span>
  </div>
</footer>
</body>
</html>
```
FILE: styles.css
```css
* { box-sizing: border-box; }
html, body { margin: 0; padding: 0; }
body {
  width: 1920px; height: 1080px; overflow: hidden;
  display: flex; flex-direction: column;
  background: #f0f0f0; color: #000;
  font-family: "Liberation Sans", "Noto Sans CJK SC", sans-serif; font-size: 12px;
}
.defs { position: absolute; }
svg { display: block; flex: none; }

/* title + menu */
.titlebar { height: 22px; background: #fff; display: flex; align-items: center; position: relative; }
.app-ico { width: 17px; height: 18px; margin-left: 2px; }
.title-text { margin: 0 0 1px 4px; font: 12.400px "Noto Sans", "Noto Sans CJK SC", sans-serif; color: #222; }
.winbtns { margin-left: auto; display: flex; margin-right: 2px; }
.winbtn { width: 46px; height: 20px; }
.menubar { height: 19px; background: #fff; display: flex; align-items: center; }
.menu-ico { width: 17px; height: 18px; margin-left: 6px; }
.doc-chip { width: 25px; height: 19px; margin-left: 21px; background: #f0f0f0; display: flex; align-items: center; justify-content: center; }
.menus { display: grid; grid-template-columns: 33px 36px 41px 44px 54px 46px 79px 60px 62px 40px; margin-left: 15px; padding-top: 2px; font: 12.500px "Noto Sans", sans-serif; color: #222; }
.mdibtns { margin-left: auto; display: flex; gap: 2px; margin-top: 3px; }
.mdi { width: 18px; height: 18px; border: 1px solid #e4e4e4; display: flex; align-items: center; justify-content: center; background: #fff; }

/* toolbars */
.toolbars { height: 59px; padding-top: 4px; }
.tbrow { display: grid; height: 26px; align-items: center; padding-left: 16px; position: relative; }
.tbrow::before { content: ""; position: absolute; left: 5px; top: 1px; bottom: 2px; border-left: 1px solid #b0b0b0; border-right: 1px solid #fff; width: 3px; }
.tbrow-a { grid-template-columns: 23px 21px 22px 22px 21px 35px 22px 21px 23px 22px 22px 34px 22px 21px 23px 22px 21px 16px; }
.tbrow-b { grid-template-columns: 34px 22px 22px 33px 22px 23px 21px 22px 35px 34px 21px 22px 23px 22px 34px 34px 21px 34px 35px 22px 22px 16px; }
.ic { width: 16px; height: 18px; }
.ic .k { fill: none; stroke: #000; }
.ic .u { fill: none; stroke: #00c; }

/* workspace */
.workspace { height: 910px; display: grid; grid-template-columns: 31px 350px 1533px; column-gap: 0; position: relative; }
.toolstrip { display: grid; grid-template-rows: 21px 24px 19px 24px 24px 20px 22px 22px 34px 23px 21px 22px 23px 20px 23px 21px 23px 18px; padding-top: 14px; justify-items: center; align-content: start; padding-left: 0; position: relative; width: 31px; }
.toolstrip::before { content: ""; position: absolute; left: 4px; top: 4px; width: 22px; border-top: 1px solid #aaa; border-bottom: 1px solid #fff; height: 2px; }
.ic-l { width: 20px; height: 18px; }
.ic-coord { width: 28px; }
.t-tool { font: 700 19px/18px "Liberation Serif", serif; }
.mini { font: 700 7px "Liberation Sans", sans-serif; }
.mini-coord { letter-spacing: -.6px; }

/* side panel */
.sidepanel { width: 350px; height: 910px; border: 2px solid #a6a6a6; border-right-color: #8c8c8c; border-bottom-color: #8c8c8c; }
.ptabs { height: 22px; display: flex; align-items: flex-end; padding-left: 2px; }
.ptab { width: 65px; height: 20px; font-weight: 700; letter-spacing: .6px; font-size: 12.500px; color: #111; text-align: center; line-height: 21px; border-top: 1px solid #fff; border-left: 1px solid #fff; }
.ptab-on { width: 95px; height: 24px; line-height: 19px; border-right: 2px solid #888; background: #f0f0f0; position: relative; z-index: 1; margin-bottom: -2px; }
.ppage { border-top: 1px solid #fff; padding-left: 3px; display: flex; flex-direction: column; align-items: flex-start; }
.group { margin: 0; border: 1px solid #a0a0a0; box-shadow: 1px 1px 0 #fff; min-width: 0; }
.group legend { padding: 0 5px; font-weight: 700; letter-spacing: .7px; font-size: 12.500px; line-height: 14px; color: #111; }
.group-browse { width: 340px; height: 334px; padding: 6px 6px 0; margin-top: 15px; }
.group-browse legend { margin-left: 0; }
.combo { height: 21px; display: flex; border: 1px solid; border-color: #808080 #fff #fff #808080; background: #fff; box-shadow: inset 1px 1px 0 #555; }
.combo-val { flex: 1; padding-left: 3px; font-weight: 700; font-size: 12.500px; line-height: 20px; letter-spacing: .6px; }
.combo-btn { width: 17px; background: #f0f0f0; border-right: 1px solid #808080; border-bottom: 1px solid #808080; display: flex; align-items: center; justify-content: center; }
.tri { width: 0; height: 0; border: 4px solid transparent; border-top: 4px solid #000; border-bottom: 0; }
.listbox { display: flex; background: #fff; border-top: 1px solid #a0a0a0; border-left: 1px solid #a0a0a0; height: 109px; padding: 1px 0 0; margin-top: 6px; }
.listbox-nodes { margin-top: 1px; height: 108px; }
.items { list-style: none; margin: 0; padding: 0; width: 308px; font: 12px/13px "Liberation Sans", sans-serif; color: #111; }
.items-full { width: 100%; }
.items li { height: 13px; padding-left: 2px; }
.items li span { display: inline-block; transform: scaleX(.84); transform-origin: 0 50%; }
.items li.sel { background: #3399ff; color: #cfe6ff; }
.vscroll-mini { width: 17px; background: #f0f0f0; display: flex; flex-direction: column; align-items: center; padding-top: 6px; }
.vscroll-mini .chev { width: 9px; height: 8px; }
.vscroll-mini .chev-b { margin-top: 61px; }
.thumb { width: 15px; height: 17px; background: #cdcdcd; margin-top: 3px; }
.btnrow { width: 327px; height: 20px; display: grid; grid-template-columns: 108px 108px 109px; column-gap: 1px; }
.btn { height: 100%; margin: 0; padding: 0; background: #f0f0f0; border: 1px solid; border-color: #fff #707070 #707070 #fff; box-shadow: inset 0 -1px 0 #a0a0a0; font: 700 12.500px "Liberation Sans", sans-serif; letter-spacing: .7px; color: #111; display: flex; align-items: center; justify-content: center; gap: 5px; }
.btn-sel { gap: 6px; padding-right: 10px; }
.chk { width: 9px; height: 9px; }
.nodes-label { height: 15px; margin-top: 7px; font-weight: 700; font-size: 12.500px; letter-spacing: .7px; line-height: 14px; color: #111; }
.preview { width: 332px; height: 141px; margin: 11px 0 0 4px; background: #000; border-top: 1px solid #a0a0a0; border-left: 1px solid #a0a0a0; }
.btnrow-wide { width: 340px; height: 22px; margin-top: 12px; grid-template-columns: 169px 170px; }
.group-layer { width: 340px; height: 52px; padding: 4px 8px 0; margin-top: 10px; }
.group-layer legend { margin-left: -6px; }
.layer-row { display: flex; align-items: flex-start; }
.combo-layer { width: 284px; height: 23px; flex: none; }
.combo-layer .combo-val { line-height: 23px; }
.swatch { width: 26px; height: 22px; margin: -1px 0 0 12px; background: #ff00ff; border-top: 1px solid #999; border-left: 1px solid #999; }

/* document panel */
.docpanel { margin-left: 8px; width: 1525px; height: 910px; border: 2px solid #9a9a9a; border-left-color: #a0a0a0; padding-left: 4px; }
.doctabs { height: 26px; margin-left: -3px; display: flex; align-items: flex-end; font-weight: 700; font-size: 12.500px; letter-spacing: .6px; color: #111; }
.dtab { height: 22px; line-height: 19px; border-right: 1px solid #999; text-align: center; background: #f0f0f0; }
.dtab-1 { width: 91px; } .dtab-2 { width: 85px; }
.dtab-3 { width: 195px; height: 24px; line-height: 19px; display: flex; gap: 6px; padding-left: 6px; border-right: 2px solid #888; letter-spacing: .9px; }
.dtab-4 { width: 162px; border-right: 1px solid #555; letter-spacing: .8px; }
.pcb-ico { width: 16px; height: 16px; }
.docgrid { display: grid; grid-template-columns: 1497px 20px; grid-template-rows: 833px 20px; border-top: 1px solid #fff; margin-top: 0; width: 1517px; }
.canvas { width: 1497px; height: 833px; }
.frame { stroke: #808080; stroke-width: 2; fill: none; }
.gridlines { stroke: #808080; fill: none; shape-rendering: crispEdges; }
.outline { fill: none; stroke: #ff00ff; stroke-width: 6; }
.pad rect { fill: #c0c0c0; stroke: #800080; stroke-width: 6; }
.pad .ring { fill: #c0c0c0; stroke: #800080; stroke-width: 6; }
.pad .hole { fill: #c8ecec; }
.padnum text { font: 11px "Liberation Sans", sans-serif; text-anchor: middle; fill: #111; }
.vscroll { height: 833px; width: 20px; display: flex; flex-direction: column; align-items: center; justify-content: space-between; padding: 5px 0 3px; position: relative; }
.vscroll .chev { width: 9px; height: 8px; }
.thumb-v { position: absolute; top: 423px; left: 1px; width: 16px; height: 17px; background: #cdcdcd; }
.hscroll { height: 20px; width: 1517px; grid-column: 1 / 3; display: flex; align-items: center; justify-content: flex-start; gap: 1473px; padding: 0 4px; position: relative; border-bottom: 1px solid #909090; }
.chev-h { width: 8px; height: 10px; }
.thumb-h { position: absolute; left: 746px; top: 3px; width: 17px; height: 15px; background: #cdcdcd; }
.layertabs { display: grid; height: 17px; margin: 5px 0 0 9px; grid-template-columns: 53.500px 70.500px 69px 64px 79px 54px 69px 58px 71.500px 53.500px 78.500px 64.500px 57px; font: 12px/15px "Liberation Sans", sans-serif; color: #111; }
.ltab { position: relative; background: #fff; border-top: 1px solid #909090; border-bottom: 1px solid #555; padding-left: 5px; white-space: nowrap; }
.ltab > span { display: inline-block; transform: scaleX(.87); transform-origin: 0 50%; }
.ltab::after { content: ""; position: absolute; right: 0; top: 0; bottom: -1px; border-right: 1px solid #555; transform: skewX(-14deg); }
.ltab:first-child::before { content: ""; position: absolute; left: 0; top: 0; bottom: -1px; border-left: 1px solid #555; transform: skewX(14deg); }
.ltab-on { background: #f0f0f0; border-top-color: #f0f0f0; border-bottom: 2px solid #808080; }

/* status + taskbar */
.statusbar { height: 30px; position: relative; }
.status-m { position: absolute; left: 158px; top: 12px; font: 700 13px/14px "Liberation Sans", sans-serif; }
.ghost { position: absolute; top: 9px; width: 16px; height: 16px; }
.ghost-1 { left: 182px; } .ghost-2 { left: 562px; }
.help-ico { position: absolute; left: 1900px; top: 9px; width: 14px; height: 18px; }
.help-q { font: 700 11px "Liberation Sans", sans-serif; fill: #00a; text-anchor: middle; }
.ime { position: absolute; left: 2px; top: 4px; width: 156px; height: 26px; background: #e4e4e4; border: 1px solid #909090; box-shadow: 1px 1px 0 #777; display: grid; grid-template-columns: 18px 71px 19px 20px 18px; padding: 3px 2px; column-gap: 1px; }
.ime-seal { background: #e01010; color: #fff; font-size: 14px; line-height: 18px; text-align: center; }
.ime-name, .ime-cell { border: 1px solid; border-color: #fff #777 #777 #fff; display: flex; align-items: center; justify-content: center; }
.ime-name { font-size: 14px; letter-spacing: 1px; color: #222; white-space: nowrap; }
.taskbar { height: 40px; background: #020812; display: flex; align-items: stretch; color: #ddd; font: 12px "Noto Sans", "Noto Sans CJK SC", sans-serif; }
.tb-sys { width: 48px; display: flex; align-items: center; justify-content: center; }
.tb-item { width: 152px; margin-left: 9px; border-bottom: 2px solid #76b9ed; display: flex; align-items: center; white-space: nowrap; }
.tb-first { margin-left: 6px; width: 152px; }
.tb-active { width: 160px; margin-left: 5px; background: #37383c; }
.tb-active + .tb-item { margin-left: 5px; }
.tb-ico { width: 15px; height: 20px; margin: 0 11px 0 9px; }
.tb-ico-client { width: 24px; height: 24px; margin: 0 4px 0 11px; }
.tb-ico-wide { width: 24px; height: 12px; margin: 0 5px 0 5px; }
.tb-ico-wx { width: 24px; height: 24px; margin: 0 2px 0 7px; }
.tb-ico-jmd { width: 24px; height: 24px; margin: 0 2px 0 7px; }
.tb-ico-bear { width: 24px; height: 24px; margin: 0 4px 0 6px; }
.tray { margin-left: auto; display: flex; align-items: center; margin-right: 6px; }
.tray-i { width: 24px; display: flex; justify-content: center; }
.tray-lang { width: 36px; text-align: center; font-size: 12.500px; }
.tray-badge { width: 36px; display: flex; justify-content: center; }
.tray-badge b { width: 22px; height: 22px; border-radius: 50%; border: 3px solid #10d060; background: #0b2b1a; color: #fff; font: 11px/16px "Liberation Sans", sans-serif; text-align: center; }
.clock { width: 88px; display: flex; flex-direction: column; align-items: center; font: 12px/17px "Liberation Sans", sans-serif; color: #e4e4e4; }
```
